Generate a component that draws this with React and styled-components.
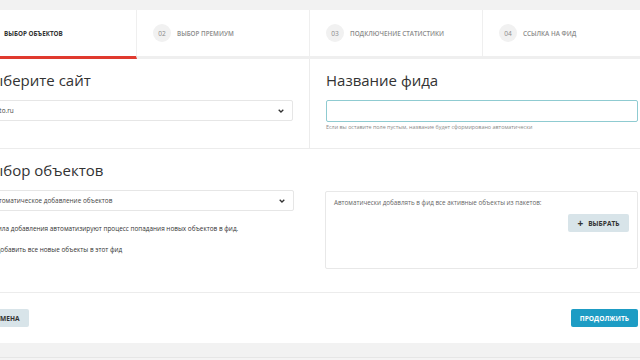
import React, { useState } from 'react';
import styled, { createGlobalStyle } from 'styled-components';

const Global = createGlobalStyle`
  body {
    margin: 0;
    background: #f2f2f2;
    font-family: "Open Sans", "Noto Sans", sans-serif;
    color: #333;
    overflow: hidden;
  }
`;

const steps = [
  { num: '01', title: 'Выбор объектов' },
  { num: '02', title: 'Выбор премиум' },
  { num: '03', title: 'Подключение статистики' },
  { num: '04', title: 'Ссылка на фид' },
];

function Chevron() {
  return (
    <svg width="6" height="4" viewBox="0 0 6 4">
      <polyline points="0.7,0.7 3,3 5.3,0.7" fill="none" stroke="#333" strokeWidth="1.3" />
    </svg>
  );
}

function App() {
  const [active, setActive] = useState(0);
  return (
    <>
      <Global />
      <Page>
        <Card>
          <Tabs>
            {steps.map((s, i) => (
              <Tab key={s.num} $active={i === active} onClick={() => setActive(i)}>
                <Num>{s.num}</Num>
                {s.title}
              </Tab>
            ))}
          </Tabs>

          <Row>
            <Col $border>
              <Title>Выберите сайт</Title>
              <Select>
                <span>avito.ru</span>
                <Chevron />
              </Select>
            </Col>
            <Col $right>
              <Title>Название фида</Title>
              <Input />
              <Hint>Если вы оставите поле пустым, название будет сформировано автоматически</Hint>
            </Col>
          </Row>

          <Row>
            <Col $tall>
              <Title>Выбор объектов</Title>
              <Select>
                <span>Автоматическое добавление объектов</span>
                <Chevron />
              </Select>
              <Note>Правила добавления автоматизируют процесс попадания новых объектов в фид.</Note>
              <Radio>
                <Dot />
                Добавить все новые объекты в этот фид
              </Radio>
            </Col>
            <Col $offset>
              <Box>
                <BoxText>Автоматически добавлять в фид все активные объекты из пакетов:</BoxText>
                <PickButton>
                  <span>+</span>Выбрать
                </PickButton>
              </Box>
            </Col>
          </Row>

          <Footer>
            <Button>Отмена</Button>
            <Button $primary>Продолжить</Button>
          </Footer>
        </Card>
        <NextCard />
      </Page>
    </>
  );
}

const Page = styled.div`
  margin-left: -36px;
  width: 692px;
  padding-top: 10px;
`;

const Card = styled.div`
  background: #fff;
`;

const Tabs = styled.div`
  display: grid;
  grid-template-columns: repeat(4, 173px);
`;

const Tab = styled.div`
  height: 46px;
  display: flex;
  align-items: center;
  gap: 6px;
  padding-left: 16px;
  font-size: 6.3px;
  font-weight: ${p => (p.$active ? 700 : 600)};
  text-transform: uppercase;
  color: ${p => (p.$active ? '#333' : '#8a8a8a')};
  border-right: 1px solid #efefef;
  border-bottom: 3px solid ${p => (p.$active ? '#e03a2f' : '#efefef')};
  cursor: pointer;
  &:last-child {
    border-right: none;
  }
`;

const Num = styled.span`
  width: 18px;
  height: 18px;
  border-radius: 50%;
  background: #f1f1f1;
  color: #8a8a8a;
  font-weight: 400;
  display: flex;
  align-items: center;
  justify-content: center;
  font-size: 6.6px;
`;

const Row = styled.div`
  display: grid;
  grid-template-columns: 1fr 1fr;
  border-bottom: 1px solid #ececec;
`;

const Col = styled.div`
  padding: ${p =>
    p.$offset ? '42px 18px 0 15px' : p.$right ? '11px 18px 0 16px' : '11px 16px 0 18px'};
  border-right: ${p => (p.$border ? '1px solid #ececec' : 'none')};
  height: ${p => (p.$tall ? '143px' : '89px')};
  box-sizing: border-box;
`;

const Title = styled.h2`
  margin: 0 0 10px;
  font-size: 15px;
  line-height: 20px;
  font-weight: 400;
  color: #333;
`;

const Select = styled.div`
  height: 21px;
  box-sizing: border-box;
  border: 1px solid #e6e6e6;
  border-radius: 2px;
  display: flex;
  align-items: center;
  justify-content: space-between;
  padding: 0 8px;
  font-size: 6.4px;
  color: #444;
`;

const Input = styled.div`
  height: 22px;
  box-sizing: border-box;
  border: 1px solid #8fcbd1;
  border-radius: 2px;
`;

const Hint = styled.div`
  font-size: 5.4px;
  line-height: 8px;
  margin-top: 1px;
  color: #8a8a8a;
`;

const Note = styled.div`
  margin-top: 13px;
  font-size: 6.4px;
  line-height: 9px;
  color: #333;
`;

const Radio = styled.label`
  margin-top: 12px;
  display: flex;
  align-items: center;
  gap: 5px;
  font-size: 6.4px;
  line-height: 9px;
  color: #333;
`;

const Dot = styled.span`
  width: 9px;
  height: 9px;
  border-radius: 50%;
  border: 1px solid #bbb;
  box-sizing: border-box;
`;

const Box = styled.div`
  height: 78px;
  box-sizing: border-box;
  border: 1px solid #e8e8e8;
  border-radius: 2px;
  padding: 6px 8px;
  display: flex;
  flex-direction: column;
  align-items: flex-start;
`;

const BoxText = styled.div`
  font-size: 6.3px;
  line-height: 9px;
  color: #666;
`;

const PickButton = styled.button`
  align-self: flex-end;
  margin-top: 7px;
  height: 18px;
  width: 61px;
  border: none;
  border-radius: 2px;
  background: #d8e4e9;
  font-family: inherit;
  font-size: 6.6px;
  font-weight: 700;
  text-transform: uppercase;
  color: #333;
  display: flex;
  align-items: center;
  justify-content: center;
  gap: 5px;
  padding: 0;
  span {
    font-size: 10px;
    line-height: 1;
    font-weight: 700;
  }
`;

const Footer = styled.div`
  height: 50px;
  display: flex;
  align-items: center;
  justify-content: space-between;
  padding: 0 18px;
`;

const Button = styled.button`
  height: 18px;
  padding: 0 9px;
  min-width: ${p => (p.$primary ? '66px' : '45px')};
  border: none;
  border-radius: 2px;
  background: ${p => (p.$primary ? '#1d9cc4' : '#d8e4e9')};
  color: ${p => (p.$primary ? '#fff' : '#333')};
  font-family: inherit;
  font-size: 6.6px;
  font-weight: 700;
  text-transform: uppercase;
`;

const NextCard = styled.div`
  margin-top: 14px;
  height: 20px;
  background: #f4f4f4;
  border-top: 1px solid #e6e6e6;
`;

export default App;
